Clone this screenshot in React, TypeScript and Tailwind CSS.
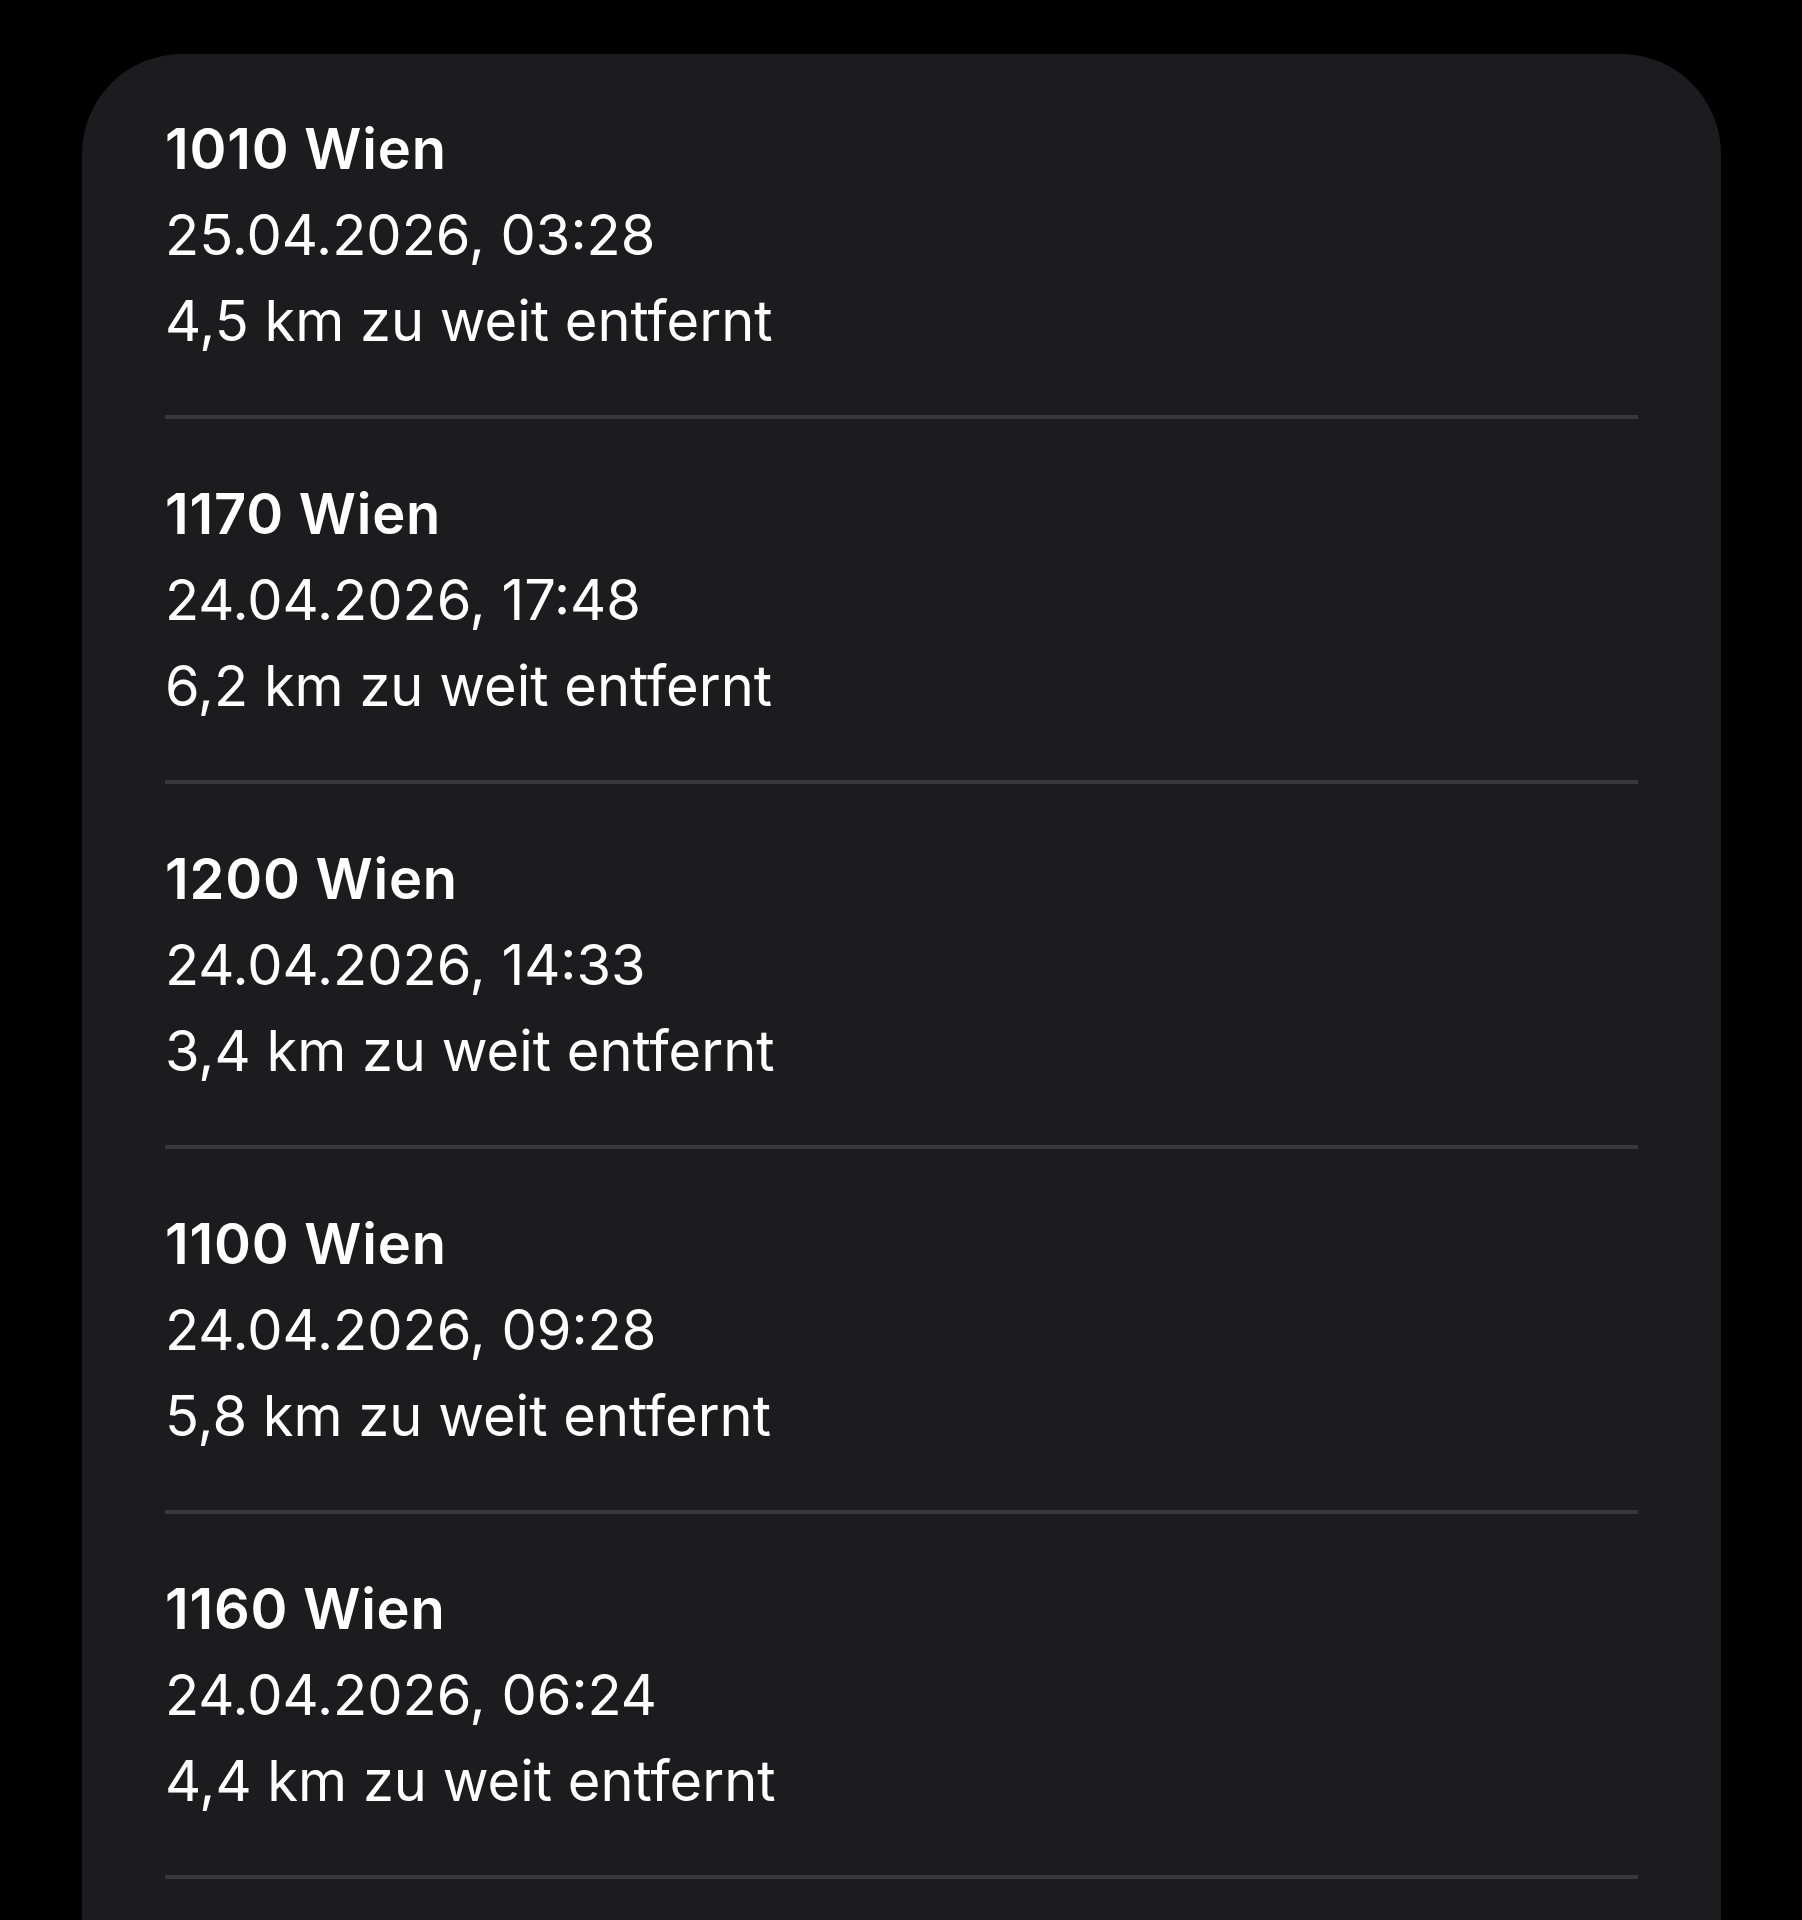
import React from "react";

const rows = [
  { t: "1010 Wien", d: "25.04.2026, 03:28", k: "4,5 km zu weit entfernt" },
  { t: "1170 Wien", d: "24.04.2026, 17:48", k: "6,2 km zu weit entfernt" },
  { t: "1200 Wien", d: "24.04.2026, 14:33", k: "3,4 km zu weit entfernt" },
  { t: "1100 Wien", d: "24.04.2026, 09:28", k: "5,8 km zu weit entfernt" },
  { t: "1160 Wien", d: "24.04.2026, 06:24", k: "4,4 km zu weit entfernt" },
];

export default function App() {
  return (
    <div className="h-[1920px] w-[1802px] overflow-hidden bg-black pt-[54px] pl-[82px] pr-[81px]" style={{ fontFamily: "Inter, 'Noto Sans', sans-serif" }}>
      <div className="rounded-t-[100px] bg-[#1c1c1e] px-[83px] pb-[200px]">
        {rows.map((r, i) => (
          <div key={i} className="border-b-[4px] border-[#38383a] pt-[52px] pb-[51px] text-white">
            <div className="text-[56px] leading-[86px] font-semibold tracking-[0.8px]">{r.t}</div>
            <div className="text-[56px] leading-[86px] font-normal">{r.d}</div>
            <div className="text-[56px] leading-[86px] font-normal">{r.k}</div>
          </div>
        ))}
      </div>
    </div>
  );
}
